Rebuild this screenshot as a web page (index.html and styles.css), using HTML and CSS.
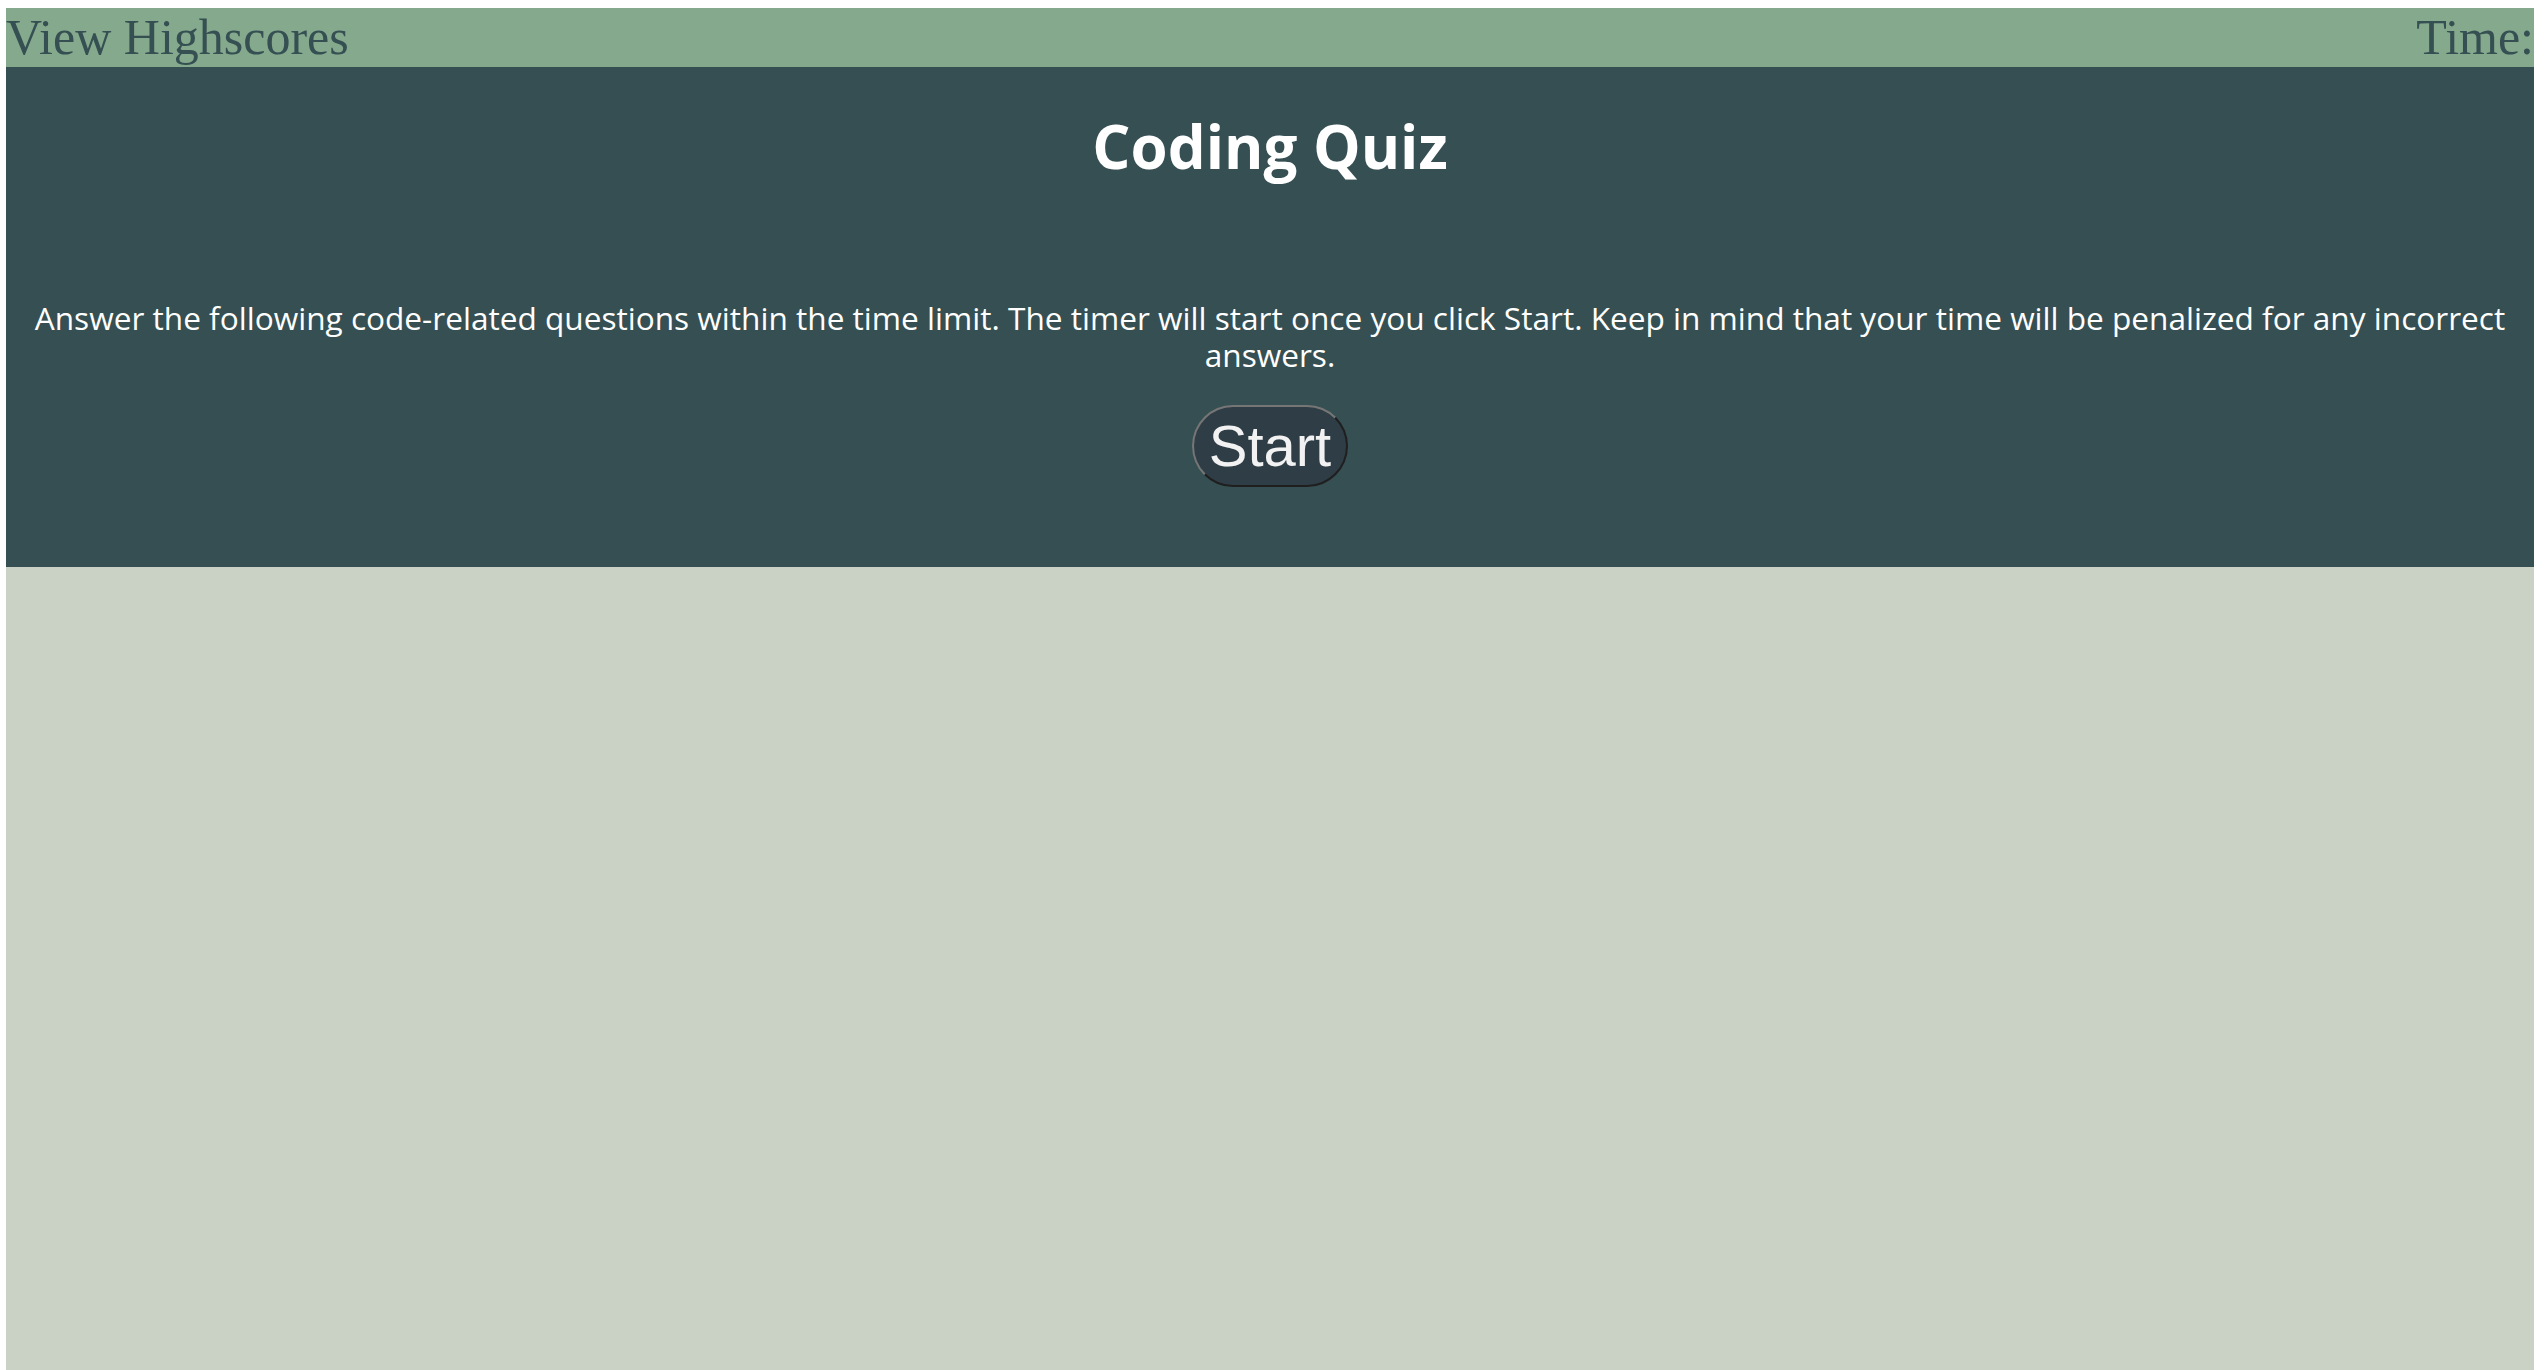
FILE: index.html
```html
<!DOCTYPE html>
<html lang="en">
<head>
<meta charset="utf-8">
<title>Coding Quiz</title>
<link rel="stylesheet" href="styles.css">
</head>
<body>
<div class="page">
  <header class="topbar">
    <a class="highscores" href="#">View Highscores</a>
    <span class="timer">Time:</span>
  </header>
  <section class="intro">
    <h1 class="title">Coding Quiz</h1>
    <p class="lead">Answer the following code-related questions within the time limit. The timer will start once you click Start. Keep in mind that your time will be penalized for any incorrect answers.</p>
    <button class="start" type="button">Start</button>
  </section>
  <main class="stage"></main>
</div>
</body>
</html>
```

FILE: styles.css
```css
html, body {
  height: 100%;
}
body {
  margin: 8px 10px 0 6px;
  background: #ffffff;
}
.page {
  display: flex;
  flex-direction: column;
  min-height: calc(100vh - 8px);
}
.topbar {
  display: flex;
  justify-content: space-between;
  align-items: flex-start;
  background: #84a98c;
  height: 59px;
  box-sizing: border-box;
  padding-top: 1px;
  font-family: "Liberation Serif", "Times New Roman", serif;
  font-size: 50px;
  line-height: 57px;
  color: #354f52;
}
.highscores {
  color: #354f52;
  text-decoration: none;
}
.timer {
  color: #354f52;
}
.intro {
  background: #354f52;
  display: flex;
  flex-direction: column;
  align-items: center;
  padding: 49px 8px 80px;
  color: #ffffff;
  text-align: center;
  font-family: "Open Sans", "DejaVu Sans", sans-serif;
}
.title {
  margin: 0;
  font-size: 60px;
  line-height: 60px;
  font-weight: 700;
}
.lead {
  margin: 123px 0 0;
  font-size: 31.6px;
  line-height: 37px;
}
.start {
  margin-top: 32px;
  font-family: "Liberation Sans", Arial, sans-serif;
  font-size: 58px;
  line-height: 66px;
  padding: 6px 15px;
  color: #f2f2f2;
  background: #2f3e46;
  border: 2px solid;
  border-color: #767676 #1f1f1f #1f1f1f #767676;
  border-radius: 42px;
  cursor: pointer;
}
.stage {
  flex: 1;
  background: #cad2c5;
}
```
